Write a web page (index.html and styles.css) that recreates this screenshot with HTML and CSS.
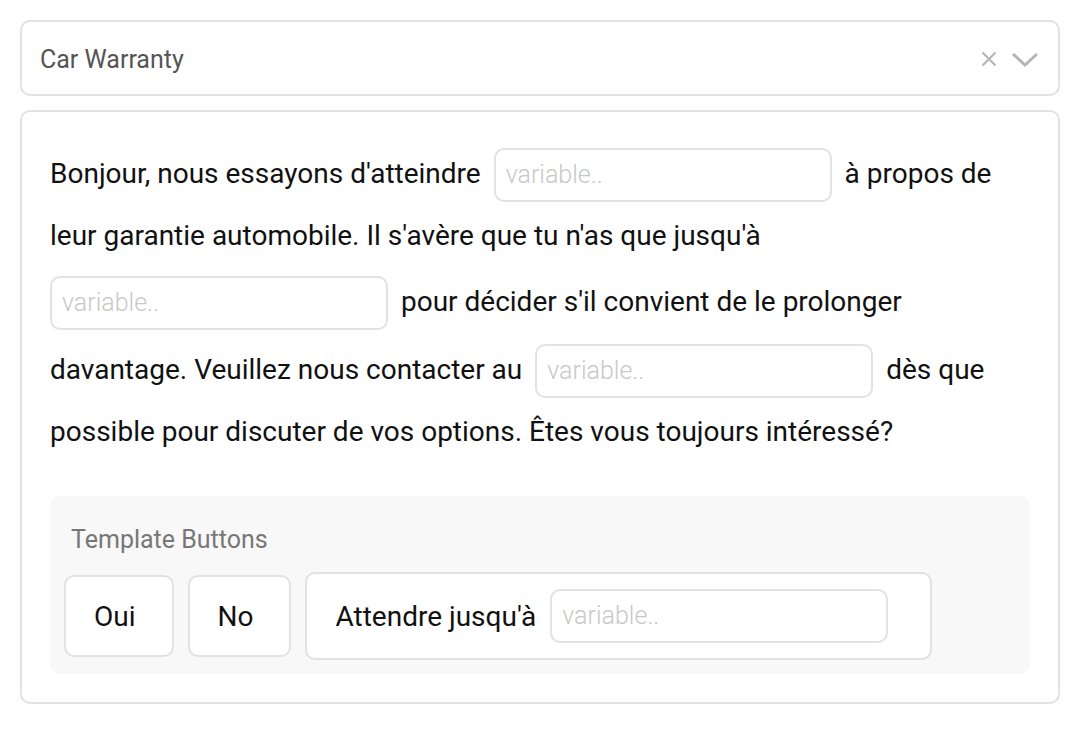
FILE: index.html
```html
<!DOCTYPE html>
<html lang="fr">
<head>
<meta charset="utf-8">
<title>Car Warranty</title>
<link rel="stylesheet" href="styles.css">
</head>
<body>
<div class="page">
  <div class="select">
    <span class="select-value">Car Warranty</span>
    <span class="select-icons">
      <svg class="icon-x" width="16" height="16" viewBox="0 0 16 16"><path d="M1.5 1.5L14.5 14.5M14.5 1.5L1.5 14.5" stroke="#b5b5b5" stroke-width="2" fill="none"/></svg>
      <svg class="icon-chev" width="28" height="18" viewBox="0 0 28 18"><path d="M2 4L14 15L26 4" stroke="#b5b5b5" stroke-width="3" fill="none"/></svg>
    </span>
  </div>
  <div class="card">
    <p class="message">Bonjour, nous essayons d'atteindre<span class="sp"> </span><span class="var">variable..</span> à propos de leur garantie automobile. Il s'avère que tu n'as que jusqu'à<span class="sp"> </span><span class="var">variable..</span> pour décider s'il convient de le prolonger davantage. Veuillez nous contacter au<span class="sp"> </span><span class="var">variable..</span> dès que possible pour discuter de vos options. Êtes vous toujours intéressé?</p>
    <div class="buttons-panel">
      <div class="panel-label">Template Buttons</div>
      <div class="buttons-row">
        <div class="tbtn">Oui</div>
        <div class="tbtn">No</div>
        <div class="tbtn tbtn-wide">Attendre jusqu'à <span class="var">variable..</span></div>
      </div>
    </div>
  </div>
</div>
</body>
</html>
```
FILE: styles.css
```css
* { box-sizing: border-box; }
html, body { margin: 0; padding: 0; background: #fff; }
body { font-family: Roboto, "Noto Sans", sans-serif; color: #111; }
.page { padding: 20px 20px; display: flex; flex-direction: column; gap: 14px; }
.select {
  height: 76px;
  border: 2px solid #e2e2e2;
  border-radius: 10px;
  display: flex;
  align-items: center;
  justify-content: space-between;
  padding: 2px 18px 0 18px;
}
.select-value { font-size: 25px; color: #555; }
.select-icons { display: flex; align-items: center; gap: 14px; padding-right: 1px; }
.icon-x { display: block; }
.icon-chev { display: block; }
.card {
  border: 2px solid #e2e2e2;
  border-radius: 10px;
  padding: 26px 28px 28px;
}
.message {
  margin: 0 0 34px;
  font-size: 28px;
  line-height: 60px;
  color: #111;
}
.sp { word-spacing: 6px; }
.var {
  display: inline-block;
  vertical-align: baseline;
  width: 338px;
  height: 54px;
  line-height: 50px;
  margin: 10px 6px 4px 0;
  border: 2px solid #e2e2e2;
  border-radius: 10px;
  padding: 0 10px;
  font-size: 25px;
  font-weight: 300;
  color: #c8c8c8;
  background: #fff;
  text-align: left;
  white-space: nowrap;
}
.buttons-panel {
  background: #f8f8f8;
  border-radius: 10px;
  padding: 29px 14px 14px;
}
.panel-label { font-size: 25px; color: #777; padding-left: 7px; line-height: 30px; margin-bottom: 17px; }
.buttons-row { display: flex; align-items: center; gap: 14px; }
.tbtn {
  background: #fff;
  border: 2px solid #e2e2e2;
  border-radius: 10px;
  height: 82px;
  display: flex;
  align-items: center;
  padding: 0 36px 0 28px;
  font-size: 28px;
  color: #111;
  white-space: pre;
}
.tbtn-wide { height: 88px; padding-right: 35px; }
.tbtn-wide .var { margin: 0 7px; }
```
